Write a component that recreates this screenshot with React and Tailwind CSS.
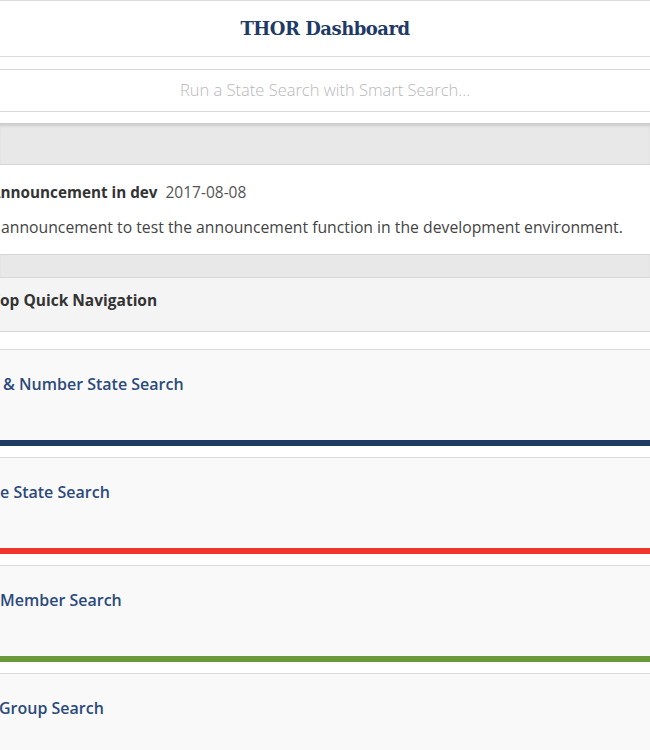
import React from "react";

const cards = [
  { title: "& Number State Search", offset: "ml-[3px]", bar: "bg-[#1f3a63]" },
  { title: "e State Search", offset: "ml-0", bar: "bg-[#f0362a]" },
  { title: "Member Search", offset: "ml-0", bar: "bg-[#6b9a3b]" },
  { title: "Group Search", offset: "-ml-[1px]", bar: "bg-[#1f3a63]" },
];

export default function App() {
  return (
    <div className="w-[650px] h-[750px] overflow-hidden bg-white font-['Open_Sans',sans-serif]">
      <header className="h-[57px] border-y border-[#dcdcdc] flex items-center justify-center">
        <h1 className="font-['DejaVu_Serif',serif] font-bold text-[18px] tracking-[-0.5px] text-[#1f3a66] leading-none">
          THOR Dashboard
        </h1>
      </header>
      <div className="mt-[12px] h-[43px] border-y border-[#d8d8d8] flex items-center justify-center text-[16.5px] font-light text-[#b8b8b8]">
        Run a State Search with Smart Search...
      </div>
      <div className="mt-[11px] bg-[#e8e8e8] pt-[41px] pb-[22px] shadow-[inset_0_4px_3px_-1px_rgba(0,0,0,0.12)]">
        <div className="bg-white border-y border-[#d6d6d6] h-[91px] pt-[16px]">
          <div className="flex items-baseline whitespace-nowrap -ml-[10px] leading-[22px]">
            <span className="font-bold text-[15.25px] text-[#333]">Announcement in dev</span>
            <span className="ml-[8px] text-[15.5px] text-[#555]">2017-08-08</span>
          </div>
          <p className="mt-[13px] ml-[1px] whitespace-nowrap text-[15.75px] leading-[22px] text-[#444]">
            announcement to test the announcement function in the development environment.
          </p>
        </div>
      </div>
      <div className="h-[55px] bg-[#f4f4f4] border-y border-[#d8d8d8] flex items-center pb-[7px]">
        <span className="-ml-[9px] whitespace-nowrap font-bold text-[15.5px] text-[#333]">
          Top Quick Navigation
        </span>
      </div>
      <div className="mt-[17px] flex flex-col">
        {cards.map((c, i) => (
          <div key={i} className="border-t border-[#dadada] pb-[11px]">
            <div className="h-[90px] bg-[#f9f9f9] pt-[24px]">
              <span className={`block whitespace-nowrap font-semibold text-[16px] leading-[20px] text-[#2c4a7c] ${c.offset}`}>
                {c.title}
              </span>
            </div>
            <div className={`h-[6px] ${c.bar}`} />
          </div>
        ))}
      </div>
    </div>
  );
}
